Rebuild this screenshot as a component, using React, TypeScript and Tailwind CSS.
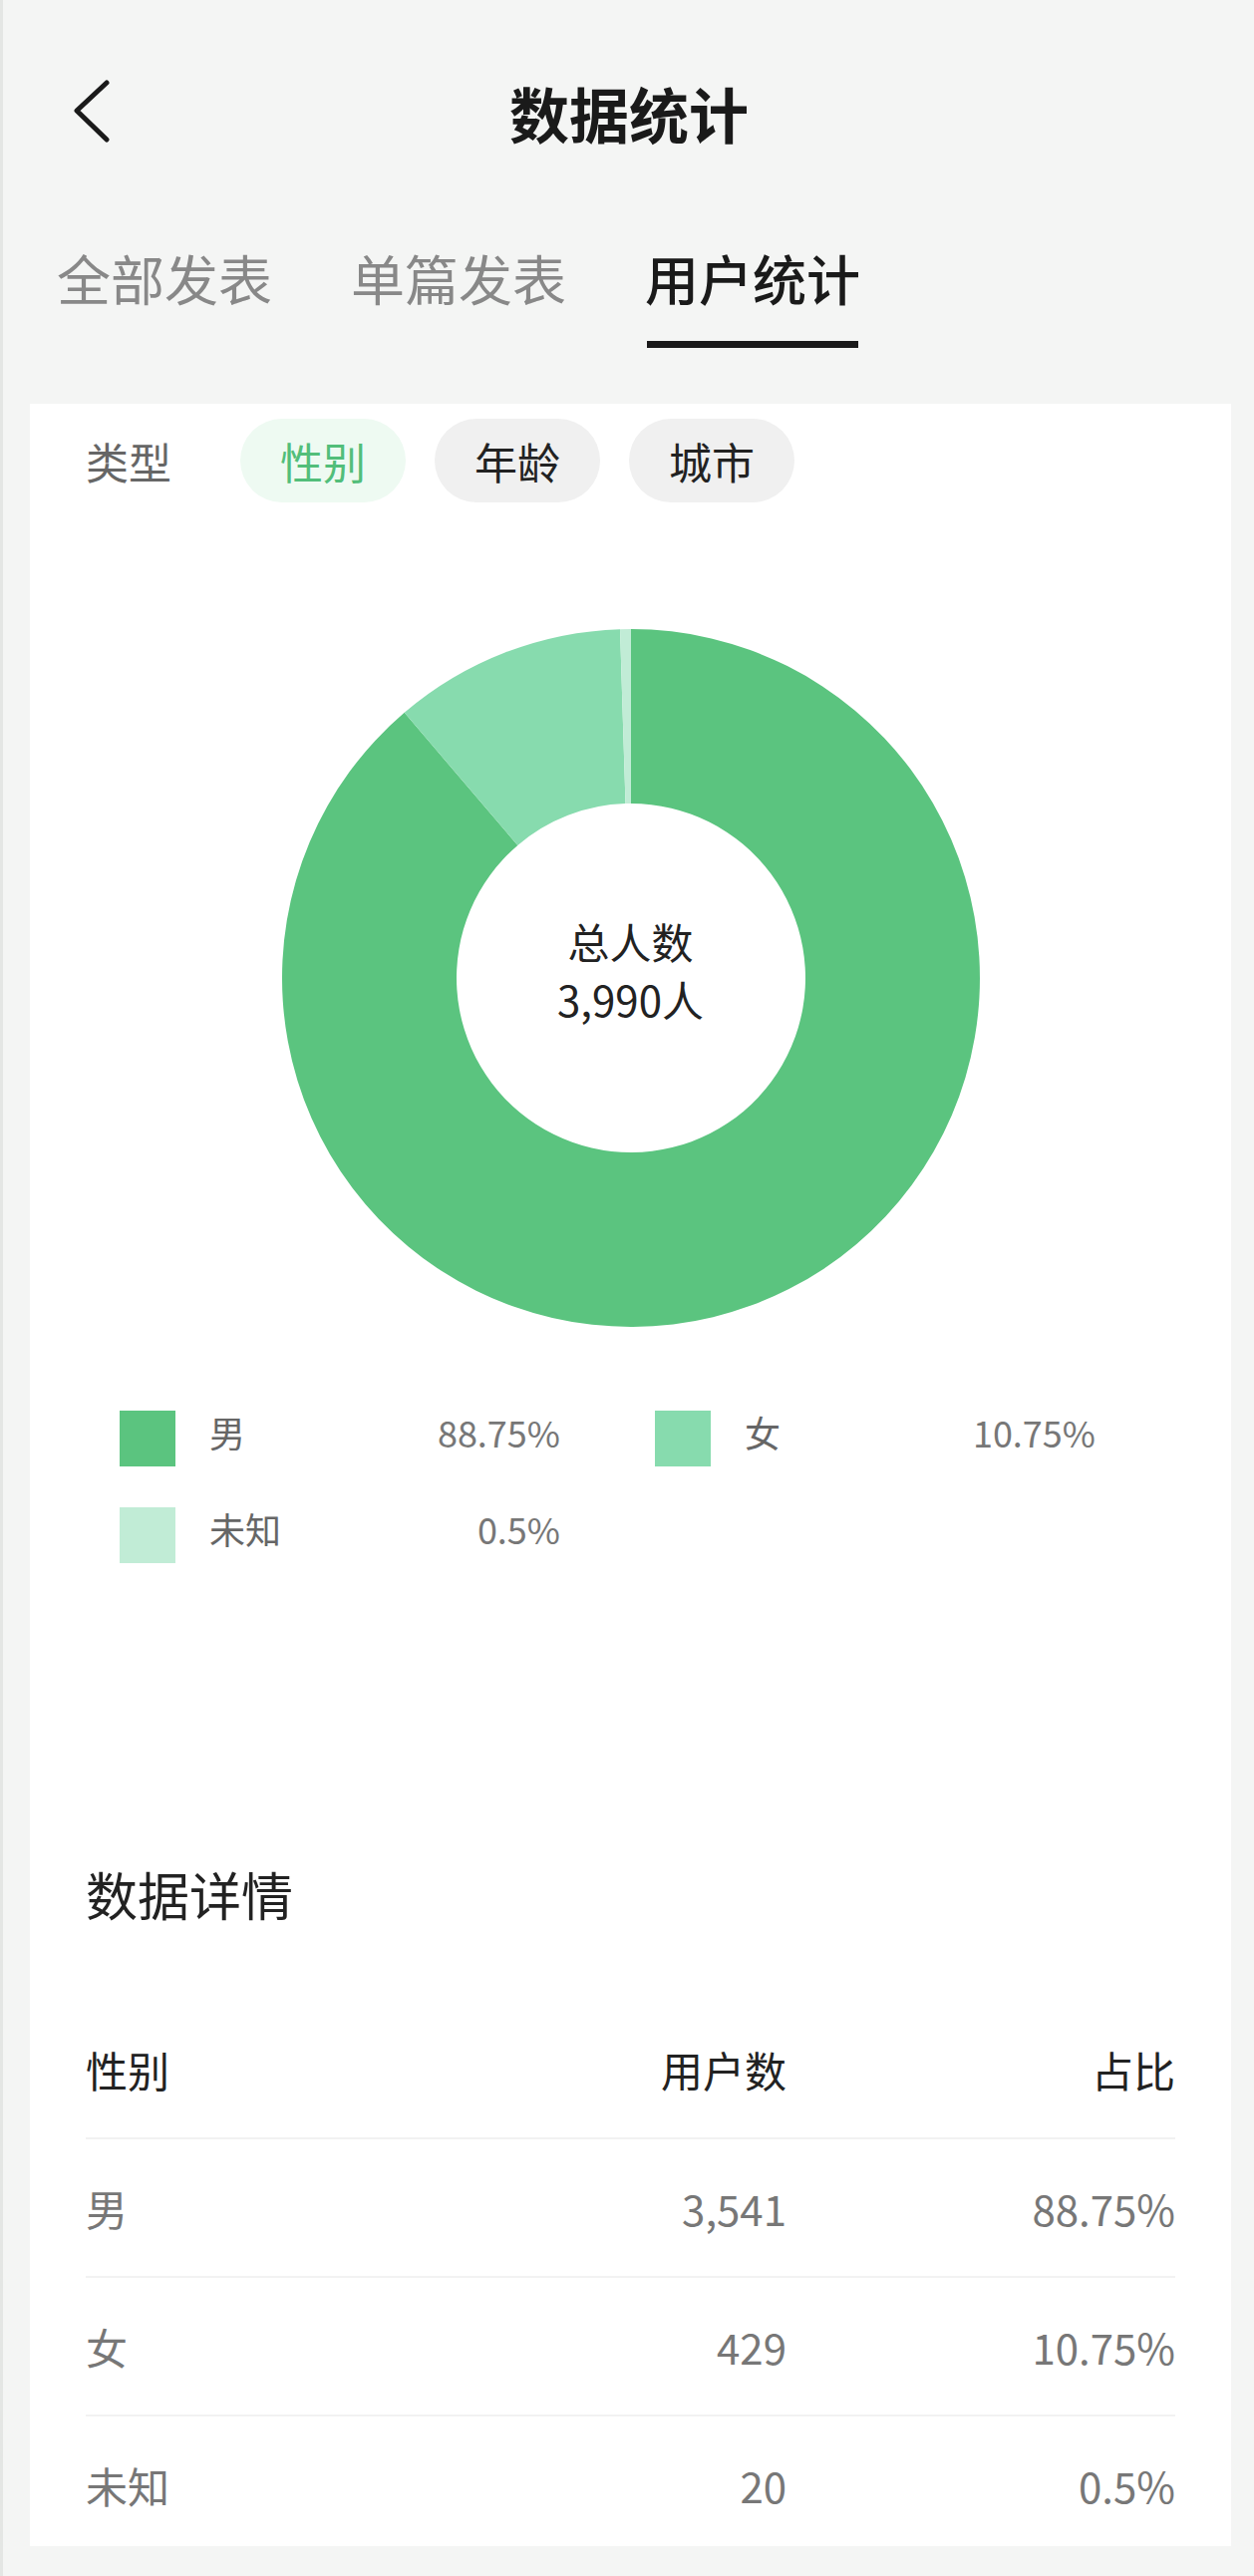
import React from 'react';

const slices = [
  { label: '男', pct: 88.75, color: '#5bc47f', users: '3,541' },
  { label: '女', pct: 10.75, color: '#87dbae', users: '429' },
  { label: '未知', pct: 0.5, color: '#c1ecd6', users: '20' },
];

function arcPath(cx: number, cy: number, R: number, r: number, a0: number, a1: number) {
  const p = (rad: number, a: number) => {
    const t = ((a - 90) * Math.PI) / 180;
    return `${(cx + rad * Math.cos(t)).toFixed(2)} ${(cy + rad * Math.sin(t)).toFixed(2)}`;
  };
  const large = a1 - a0 > 180 ? 1 : 0;
  return `M ${p(R, a0)} A ${R} ${R} 0 ${large} 1 ${p(R, a1)} L ${p(r, a1)} A ${r} ${r} 0 ${large} 0 ${p(r, a0)} Z`;
}

function Donut() {
  let start = 0;
  return (
    <div className="relative mx-auto h-[700px] w-[700px]">
      <svg width="700" height="700" viewBox="0 0 700 700">
        {slices.map((s) => {
          const end = start + (s.pct / 100) * 360;
          const d = arcPath(350, 350, 350, 175, start, end);
          start = end;
          return <path key={s.label} d={d} fill={s.color} />;
        })}
      </svg>
      <div className="absolute inset-0 flex flex-col items-center justify-center pb-[16px] text-[42px] leading-[58px] text-[#222]">
        <span>总人数</span>
        <span>3,990人</span>
      </div>
    </div>
  );
}

export default function App() {
  return (
    <div
      className="h-[2584px] w-[1258px] overflow-hidden border-l-[3px] border-[#e4e6e4] bg-[#f4f5f4]"
      style={{ fontFamily: '"Noto Sans CJK SC", "Noto Sans", sans-serif' }}
    >
      {/* Header */}
      <div className="relative flex h-[226px] items-center justify-center">
        <button type="button" className="absolute left-[68px] top-[80px] p-0">
          <svg width="42" height="64" viewBox="0 0 42 64" fill="none">
            <path d="M36 3 L6 31 L36 60" stroke="#1a1a1a" strokeWidth="5" strokeLinecap="round" strokeLinejoin="round" />
          </svg>
        </button>
        <h1 className="ml-[1px] text-[60px] font-bold leading-[70px] text-[#1a1a1a]">数据统计</h1>
      </div>

      {/* Tabs */}
      <div className="flex gap-[79px] pl-[54px] pt-[23px]">
        <div className="text-[54px] leading-[60px] text-[#888]">全部发表</div>
        <div className="text-[54px] leading-[60px] text-[#888]">单篇发表</div>
        <div className="flex flex-col items-stretch">
          <div className="text-[54px] font-medium leading-[60px] text-[#1a1a1a]">用户统计</div>
          <div className="mx-[2px] mt-[33px] h-[7px] bg-[#1a1a1a]" />
        </div>
      </div>

      {/* Card */}
      <div className="ml-[27px] mt-[56px] w-[1205px] bg-white px-[56px] pt-[15px]">
        {/* filter */}
        <div className="flex h-[84px] items-center">
          <span className="mr-[69px] text-[43px] leading-[50px] text-[#666]">类型</span>
          <div className="flex gap-[29px]">
            <span className="flex h-[84px] items-center rounded-full bg-[#eefaf2] px-[40px] text-[43px] text-[#52be7a]">性别</span>
            <span className="flex h-[84px] items-center rounded-full bg-[#f0f0f0] px-[40px] text-[43px] text-[#222]">年龄</span>
            <span className="flex h-[84px] items-center rounded-full bg-[#f0f0f0] px-[40px] text-[43px] text-[#222]">城市</span>
          </div>
        </div>

        <div className="mt-[127px]">
          <Donut />
        </div>

        {/* legend */}
        <div className="mt-[84px] grid grid-cols-[442px_442px] gap-x-[95px] gap-y-[41px] pl-[34px]">
          {slices.map((s) => (
            <div key={s.label} className="flex h-[56px] items-center">
              <span className="h-[56px] w-[56px] shrink-0" style={{ backgroundColor: s.color }} />
              <span className="ml-[34px] flex-1 pb-[14px] text-[36px] leading-[44px] text-[#666]">{s.label}</span>
              <span className="pb-[14px] text-[36px] leading-[44px] text-[#777]">{s.pct}%</span>
            </div>
          ))}
        </div>

        {/* details */}
        <h2 className="mt-[302px] text-[52px] leading-[60px] text-[#222]">数据详情</h2>

        <div className="mt-[77px]">
          <div className="grid h-[139px] grid-cols-[1fr_300px_390px] items-center border-b-2 border-[#f2f2f2] text-[42px] text-[#222]">
            <span>性别</span>
            <span className="text-right">用户数</span>
            <span className="text-right">占比</span>
          </div>
          {slices.map((s, i) => (
            <div
              key={s.label}
              className={
                i < slices.length - 1
                  ? 'grid h-[139px] grid-cols-[1fr_300px_390px] items-center border-b-2 border-[#f2f2f2] text-[42px] text-[#777]'
                  : 'grid h-[130px] grid-cols-[1fr_300px_390px] items-center pt-[6px] text-[42px] text-[#777]'
              }
            >
              <span>{s.label}</span>
              <span className="text-right">{s.users}</span>
              <span className="text-right">{s.pct}%</span>
            </div>
          ))}
        </div>
      </div>
    </div>
  );
}
